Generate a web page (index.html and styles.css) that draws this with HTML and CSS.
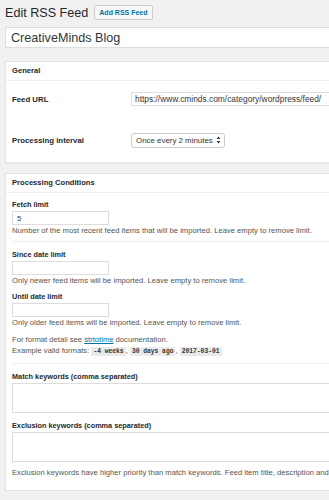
FILE: index.html
```html
<!DOCTYPE html>
<html lang="en">
<head>
    <meta charset="UTF-8" />
    <meta name="viewport" content="width=device-width, initial-scale=1.0" />
    <title>Edit RSS Feed</title>
    <link rel="stylesheet" href="styles.css">
</head>
<body>
    <div class="wrap">
        <div class="page-head">
            <h1>Edit RSS Feed</h1>
            <a href="#" class="add-btn">Add RSS Feed</a>
        </div>

        <input type="text" class="title-input" value="CreativeMinds Blog" />

        <div class="postbox general">
            <h2 class="box-title">General</h2>
            <div class="inside">
                <div class="form-row">
                    <label class="row-label" for="feedUrl">Feed URL</label>
                    <input type="text" id="feedUrl" class="url-input" value="https://www.cminds.com/category/wordpress/feed/" />
                </div>
                <div class="form-row">
                    <label class="row-label">Processing interval</label>
                    <div class="select-box">
                        <span>Once every 2 minutes</span>
                        <svg width="5" height="8" viewBox="0 0 5 8">
                            <path d="M2.5 0.5 L4.5 3 L0.5 3 Z" fill="#333" />
                            <path d="M2.5 7.5 L4.5 5 L0.5 5 Z" fill="#333" />
                        </svg>
                    </div>
                </div>
            </div>
        </div>

        <div class="postbox conditions">
            <h2 class="box-title">Processing Conditions</h2>
            <div class="inside">
                <div class="field">
                    <label>Fetch limit</label>
                    <input type="text" class="small-input" value="5" />
                    <p class="description">Number of the most recent feed items that will be imported. Leave empty to remove limit.</p>
                </div>

                <hr class="divider" />

                <div class="field">
                    <label>Since date limit</label>
                    <input type="text" class="small-input" />
                    <p class="description">Only newer feed items will be imported. Leave empty to remove limit.</p>
                </div>
                <div class="field">
                    <label>Until date limit</label>
                    <input type="text" class="small-input" />
                    <p class="description">Only older feed items will be imported. Leave empty to remove limit.</p>
                </div>
                <p class="description format-note">
                    For format detail see <a href="#">strtotime</a> documentation.<br />
                    Example valid formats: <code>-4 weeks</code>, <code>30 days ago</code>, <code>2017-03-01</code>
                </p>

                <hr class="divider" />

                <div class="field">
                    <label>Match keywords (comma separated)</label>
                    <textarea class="keywords"></textarea>
                </div>
                <div class="field">
                    <label>Exclusion keywords (comma separated)</label>
                    <textarea class="keywords"></textarea>
                    <p class="description last">Exclusion keywords have higher priority than match keywords. Feed item title, description and content are checked.</p>
                </div>
            </div>
        </div>
    </div>
</body>
</html>
```

FILE: styles.css
```css
* {
    margin: 0;
    padding: 0;
    box-sizing: border-box;
}

html,
body {
    overflow: hidden;
}

body {
    background: #f1f1f1;
    color: #23282d;
    font-family: 'Liberation Sans', Arial, sans-serif;
    font-size: 7.65px;
}

.wrap {
    width: 380px;
    padding-left: 5px;
}

/* Page heading */
.page-head {
    display: flex;
    align-items: center;
    height: 25px;
}

.page-head h1 {
    font-size: 12.6px;
    font-weight: 400;
    color: #23282d;
    margin-right: 6px;
}

.add-btn {
    display: inline-block;
    height: 15px;
    line-height: 13px;
    padding: 0 4px;
    border: 1px solid #ccc;
    border-radius: 2px;
    background: #f7f7f7;
    color: #0073aa;
    font-size: 7px;
    font-weight: 700;
    text-decoration: none;
}

.title-input {
    display: block;
    width: 100%;
    height: 21px;
    margin-top: 2px;
    padding: 0 5px;
    border: 1px solid #ddd;
    background: #fff;
    color: #32373c;
    font-family: 'Liberation Sans', Arial, sans-serif;
    font-size: 12.6px;
    outline: none;
}

/* Boxes */
.postbox {
    background: #fff;
    border: 1px solid #e5e5e5;
    box-shadow: 0 1px 1px rgba(0, 0, 0, 0.04);
}

.general {
    margin-top: 13px;
}

.conditions {
    margin-top: 10px;
}

.box-title {
    height: 19px;
    line-height: 18px;
    padding-left: 6px;
    border-bottom: 1px solid #eee;
    font-size: 7.6px;
    font-weight: 700;
    color: #23282d;
}

/* General rows */
.general .inside {
    padding-bottom: 4px;
}

.form-row {
    display: flex;
    align-items: center;
    height: 36px;
    margin-bottom: 5px;
}

.form-row:last-child {
    margin-bottom: 0;
}

.row-label {
    width: 125px;
    padding-left: 6px;
    font-size: 7.8px;
    font-weight: 700;
}

.url-input {
    flex: 1;
    height: 14px;
    padding: 0 3px;
    border: 1px solid #ddd;
    background: #fff;
    color: #32373c;
    font-family: 'Liberation Sans', Arial, sans-serif;
    font-size: 8.4px;
    outline: none;
}

.select-box {
    display: flex;
    align-items: center;
    gap: 3px;
    height: 15px;
    padding: 0 3px 0 4px;
    border: 1px solid #ccc;
    border-radius: 3px;
    background: #fff;
    font-size: 7.9px;
    color: #32373c;
}

/* Conditions */
.conditions .inside {
    padding: 6px 0 11px 6px;
}

.field {
    margin-bottom: 4px;
}

.field label {
    display: block;
    height: 12px;
    line-height: 12px;
    font-size: 7.3px;
    font-weight: 700;
}

.small-input {
    display: block;
    width: 97px;
    height: 14px;
    padding: 0 4px;
    border: 1px solid #ddd;
    background: #fff;
    color: #32373c;
    font-family: 'Liberation Sans', Arial, sans-serif;
    font-size: 7.6px;
    outline: none;
}

.description {
    line-height: 12px;
    color: #555;
    white-space: nowrap;
}

.description.last {
    margin-top: 5px;
}

.format-note {
    line-height: 11px;
    margin-top: 5px;
}

.format-note a {
    color: #0073aa;
}

code {
    padding: 1px 2px;
    background: #eaeaea;
    color: #333;
    font-family: 'Liberation Mono', 'DejaVu Sans Mono', monospace;
    font-size: 6.3px;
    font-weight: 700;
}

.divider {
    border: 0;
    border-top: 1px solid #eee;
    margin: 2px 0 7px;
}

.format-note + .divider {
    margin-top: 6px;
}

.keywords {
    display: block;
    width: 100%;
    height: 30px;
    border: 1px solid #ddd;
    background: #fff;
    resize: none;
    outline: none;
}

.field:has(.keywords) {
    margin-bottom: 7px;
}

.field:last-child {
    margin-bottom: 0;
}
```
